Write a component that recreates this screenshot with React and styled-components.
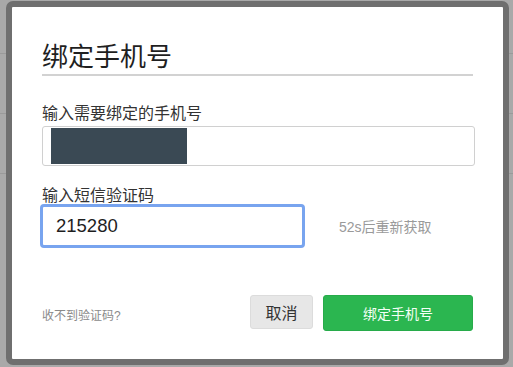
import React from "react";
import styled, { createGlobalStyle } from "styled-components";

const Global = createGlobalStyle`
  html, body { margin: 0; padding: 0; }
  body {
    background: #a9a9a9;
    width: 513px;
    height: 367px;
    overflow: hidden;
    font-family: "Liberation Sans", "Noto Sans CJK SC", sans-serif;
  }
`;

const Backdrop = styled.div`
  display: flex;
  flex-direction: column;
`;

const BgRow = styled.div`
  height: ${(p) => p.$h}px;
  border-bottom: 1px solid #9a9a9a;
  box-sizing: border-box;
`;

const Overlay = styled.div`
  position: fixed;
  left: 6px;
  top: 1px;
`;

const Dialog = styled.div`
  width: 491px;
  height: 352px;
  box-sizing: content-box;
  background: #fff;
  border: 6px solid #6f6f6f;
  border-radius: 7px;
  display: flex;
  flex-direction: column;
`;

const Body = styled.div`
  padding: 35px 30px 0 30px;
  display: flex;
  flex-direction: column;
`;

const Title = styled.h1`
  margin: 0;
  font-size: 26px;
  line-height: 30px;
  font-weight: 400;
  color: #1f1f1f;
  padding-bottom: 2px;
  border-bottom: 2px solid #d2d2d2;
`;

const Label = styled.div`
  margin-top: ${(p) => p.$mt}px;
  font-size: 16px;
  line-height: 20px;
  color: #333;
`;

const PhoneBox = styled.div`
  margin-top: 2px;
  margin-right: -2px;
  height: 40px;
  box-sizing: border-box;
  border: 1px solid #d0d0d0;
  border-radius: 3px;
  padding: 1px 8px;
  display: flex;
  align-items: stretch;
`;

const Mask = styled.div`
  width: 136px;
  background: #3a4954;
`;

const CodeRow = styled.div`
  margin-top: -2px;
  margin-left: -2px;
  display: flex;
  align-items: center;
`;

const CodeInput = styled.div`
  width: 265px;
  height: 44px;
  box-sizing: border-box;
  border: 3px solid #78a4ef;
  border-radius: 4px;
  padding-left: 13px;
  display: flex;
  align-items: center;
  font-size: 18.5px;
  color: #1e1e1e;
`;

const Countdown = styled.span`
  margin-left: 34px;
  font-size: 14px;
  color: #9a9a9a;
`;

const Footer = styled.div`
  margin-top: 47px;
  display: flex;
  align-items: flex-start;
`;

const Help = styled.span`
  margin-top: 14px;
  font-size: 12px;
  line-height: 14px;
  color: #8a8a8a;
  flex: 1;
`;

const Button = styled.button`
  box-sizing: border-box;
  height: ${(p) => (p.$primary ? 36 : 34)}px;
  width: ${(p) => (p.$primary ? 150 : 63)}px;
  margin-left: ${(p) => (p.$primary ? 10 : 0)}px;
  border-radius: 3px;
  border: 1px solid ${(p) => (p.$primary ? "#27ab4a" : "#dcdcdc")};
  background: ${(p) => (p.$primary ? "#2bb650" : "#e7e7e7")};
  color: ${(p) => (p.$primary ? "#f4fff6" : "#333")};
  font-size: ${(p) => (p.$primary ? 14 : 16)}px;
  font-family: "Liberation Sans", "Noto Sans CJK SC", sans-serif;
  padding: 0;
  display: flex;
  align-items: center;
  justify-content: center;
`;

export default function App() {
  return (
    <>
      <Global />
      <Backdrop>
        <BgRow $h={54} />
        <BgRow $h={60} />
        <BgRow $h={60} />
      </Backdrop>
      <Overlay>
        <Dialog>
          <Body>
            <Title>绑定手机号</Title>
            <Label $mt={28}>输入需要绑定的手机号</Label>
            <PhoneBox>
              <Mask />
            </PhoneBox>
            <Label $mt={20}>输入短信验证码</Label>
            <CodeRow>
              <CodeInput>215280</CodeInput>
              <Countdown>52s后重新获取</Countdown>
            </CodeRow>
            <Footer>
              <Help>收不到验证码?</Help>
              <Button>取消</Button>
              <Button $primary>绑定手机号</Button>
            </Footer>
          </Body>
        </Dialog>
      </Overlay>
    </>
  );
}
